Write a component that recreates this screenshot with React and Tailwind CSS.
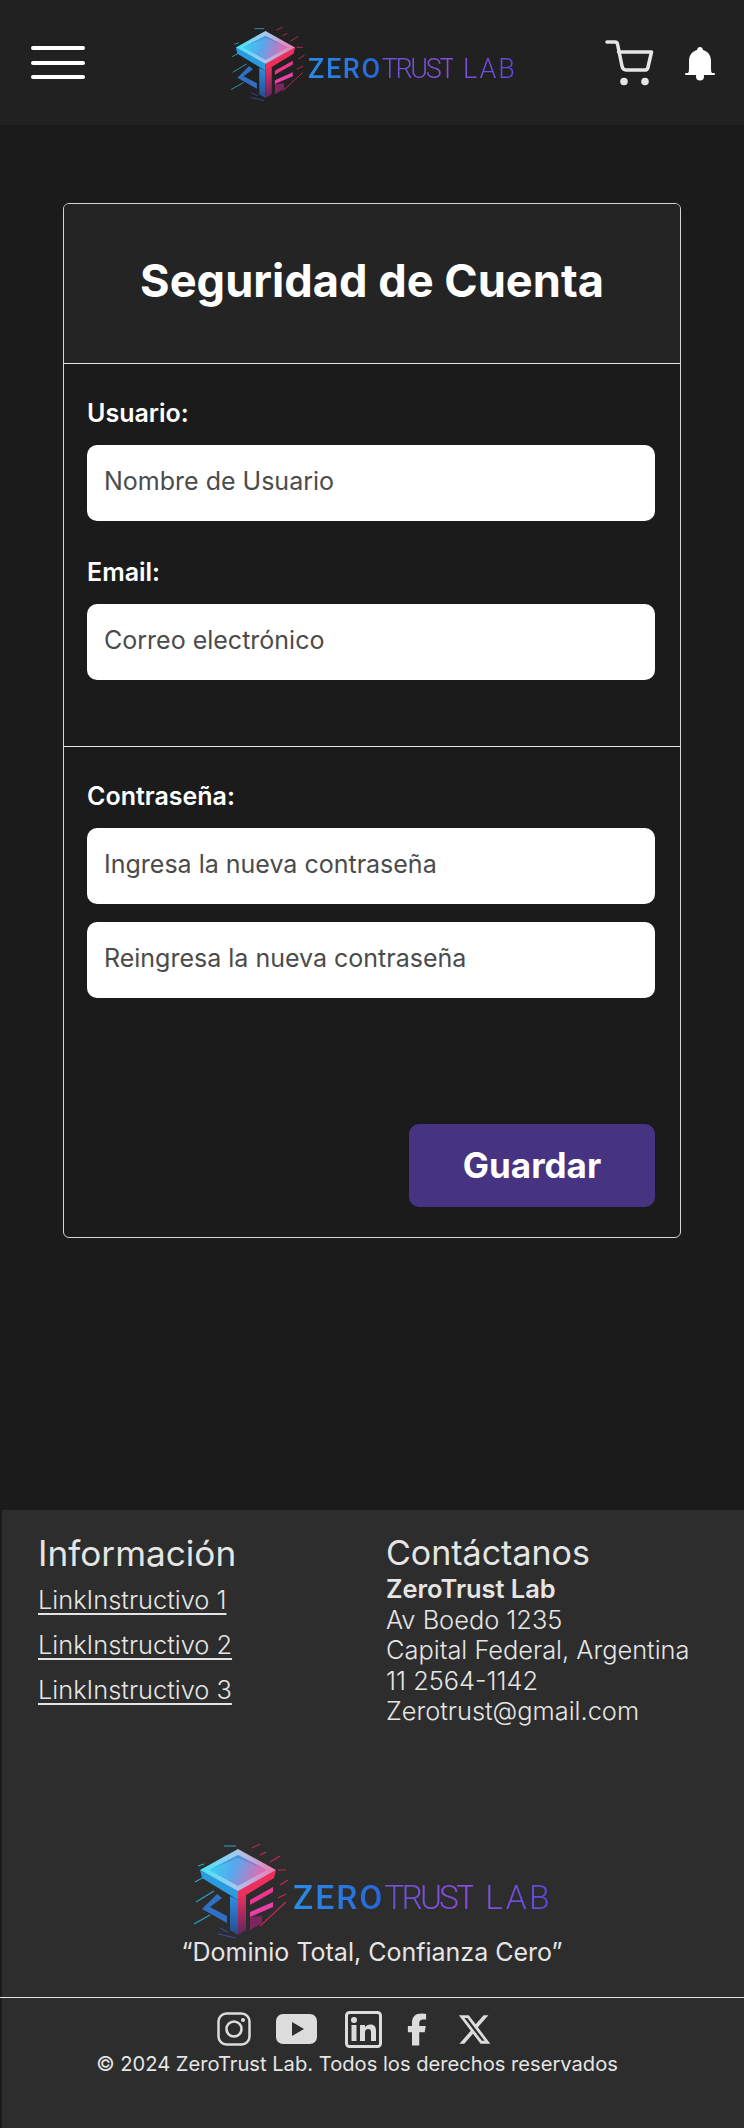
import React from "react";
import { FaFacebookF, FaXTwitter } from "react-icons/fa6";

const inter = { fontFamily: "Inter, sans-serif" };

function Cube({ className, id }) {
  return (
    <svg viewBox="0 0 105 100" className={className}>
      <defs>
        <linearGradient id={id + "t"} x1="0" y1="0" x2="1" y2="0.2">
          <stop offset="0" stopColor="#2fdcf5" />
          <stop offset="0.5" stopColor="#5aa6ec" />
          <stop offset="1" stopColor="#e56bb0" />
        </linearGradient>
        <linearGradient id={id + "r"} x1="0" y1="0" x2="1" y2="0">
          <stop offset="0" stopColor="#3fe6f8" />
          <stop offset="0.5" stopColor="#a9c6ee" />
          <stop offset="1" stopColor="#f07ab0" />
        </linearGradient>
        <linearGradient id={id + "c"} x1="0" y1="0" x2="0" y2="1">
          <stop offset="0" stopColor="#2f8fe0" />
          <stop offset="1" stopColor="#254a90" />
        </linearGradient>
        <linearGradient id={id + "p"} x1="0" y1="0" x2="0" y2="1">
          <stop offset="0" stopColor="#f0305f" />
          <stop offset="1" stopColor="#5d2560" />
        </linearGradient>
      </defs>
      <g strokeWidth="1.100" fill="none">
        <path d="M6 62 L24 51M4 84 L20 75M5 42 L14 37M8 26 L14 24M34 6 L46 6" stroke="#2aa6c8" />
        <path d="M62 8 L70 4M70 15 L76 12M80 22 L90 16M88 30 L96 30M90 45 L98 40M88 58 L96 54M70 86 L96 62" stroke="#c8285a" />
        <path d="M28 94 L46 98M30 88 L38 92" stroke="#3a4a9a" />
      </g>
      <path d="M10 30 L48 50 L48 60 L12 38Z" fill="#2a9be0" />
      <path d="M48 50 L86 30 L84 38 L48 60Z" fill="#ee2f5e" />
      <path d="M48 9 L86 30 L48 51 L10 30Z" fill={`url(#${id}r)`} />
      <path d="M48 15 L77 30 L48 46 L19 30Z" fill={`url(#${id}t)`} />
      <path d="M48 15 L77 30 L48 18 L19 30Z" fill="#2d6fb4" opacity="0.35" />
      <path d="M40 56 L48 60 L48 95 L40 90Z" fill={`url(#${id}c)`} />
      <path d="M48 60 L56 55 L56 90 L48 95Z" fill={`url(#${id}p)`} />
      <path d="M27 54 L32 58 L20 67 L37 76 L37 83 L12 69Z" fill="#2f6fc4" />
      <path d="M60 60 L83 47 L83 52 L60 65Z" fill="#f0358f" />
      <path d="M60 72 L83 62 L83 67 L60 77Z" fill="#ea3fa8" />
      <path d="M60 60 L60 90 L72 83 L72 76 L60 77Z" fill="#7c2560" />
    </svg>
  );
}

function LogoText({ className }) {
  return (
    <span className={"flex whitespace-nowrap leading-none " + className} style={{ fontFamily: "Roboto, sans-serif" }}>
      <span className="font-medium bg-linear-to-r from-[#2b8be8] to-[#2766d8] bg-clip-text text-transparent tracking-[0.06em]">ZERO</span>
      <span className="font-light bg-linear-to-r from-[#6a52d0] to-[#8a4ee0] bg-clip-text text-transparent tracking-[-0.085em]">TRUST</span>
      <span className="font-light bg-linear-to-r from-[#8450dc] to-[#5a48e4] bg-clip-text text-transparent tracking-[0.07em] ml-[0.36em]">LAB</span>
    </span>
  );
}

function Field({ text }) {
  return (
    <div className="h-[76px] w-full rounded-[10px] bg-white pl-[17px] pb-[3px] flex items-center text-[25px] text-[#4b4b4b]">
      {text}
    </div>
  );
}

function Label({ text }) {
  return <div className="h-[32px] leading-[32px] text-[25px] font-semibold text-white">{text}</div>;
}

function FooterLink({ text }) {
  return <a className="block h-[45px] leading-[45px] text-[25.400px] font-light underline underline-offset-[4px] text-[#e5e5e5]">{text}</a>;
}

export default function App() {
  return (
    <div className="w-[744px] h-[2128px] bg-[#1b1b1b] flex flex-col" style={inter}>
      <header className="h-[125px] bg-[#212121] flex items-center pl-[31px] pr-[29px] shrink-0">
        <div className="w-[54px] flex flex-col gap-[10.500px]">
          <div className="h-[4px] rounded-full bg-white" />
          <div className="h-[4px] rounded-full bg-white" />
          <div className="h-[4px] rounded-full bg-white" />
        </div>
        <div className="flex items-center ml-[143px]">
          <Cube id="h" className="w-[82px] h-[78px]" />
          <div className="pt-[14px] -ml-[2px]"><LogoText className="text-[27px]" /></div>
        </div>
        <svg viewBox="0 0 50 48" className="ml-auto w-[50px] h-[48px] mt-[-2px]">
          <path d="M3 4 H11 Q13 4 13.500 6 L18 28 Q18.800 32 22 32 H41 Q43 32 43.800 30 L47.500 14 H14.500" fill="none" stroke="#e5e5e5" strokeWidth="3.500" strokeLinecap="round" strokeLinejoin="round" />
          <circle cx="20" cy="43.500" r="3.800" fill="#e5e5e5" />
          <circle cx="41" cy="43.500" r="3.800" fill="#e5e5e5" />
        </svg>
        <svg viewBox="0 0 30 34" className="ml-[31px] w-[30px] h-[34px] mt-[2px]">
          <path d="M15 0 Q17.500 0 18 3 C23.500 4.500 26 9 26 14 L26 22 Q26 25 27 26 H3 Q4 25 4 22 L4 14 C4 9 6.500 4.500 12 3 Q12.500 0 15 0Z" fill="#fff" />
          <rect x="0" y="26" width="30" height="2" rx="1" fill="#fff" />
          <circle cx="15" cy="29.500" r="4" fill="#fff" />
        </svg>
      </header>

      <main className="flex-1 px-[63px] pt-[78px]">
        <div className="w-[618px] h-[1035px] rounded-[6px] border border-[#d4d4d4] overflow-hidden flex flex-col">
          <div className="h-[160px] bg-[#242424] border-b border-[#e5e5e5] flex items-center justify-center text-[45.200px] font-bold text-white shrink-0 pb-[6px]">
            Seguridad de Cuenta
          </div>
          <div className="h-[383px] border-b border-[#e5e5e5] pl-[23px] pr-[25px] pt-[33px] flex flex-col shrink-0">
            <Label text="Usuario:" />
            <div className="mt-[16px]"><Field text="Nombre de Usuario" /></div>
            <div className="mt-[35px]"><Label text="Email:" /></div>
            <div className="mt-[16px]"><Field text="Correo electrónico" /></div>
          </div>
          <div className="flex-1 pl-[23px] pr-[25px] pt-[33px] pb-[30px] flex flex-col">
            <Label text="Contraseña:" />
            <div className="mt-[16px]"><Field text="Ingresa la nueva contraseña" /></div>
            <div className="mt-[18px]"><Field text="Reingresa la nueva contraseña" /></div>
            <div className="mt-auto self-end w-[246px] h-[83px] rounded-[10px] bg-[#463482] flex items-center justify-center text-[35px] font-bold text-white">
              Guardar
            </div>
          </div>
        </div>
      </main>

      <footer className="h-[618px] ml-[2px] bg-[#2d2d2d] text-[#e5e5e5] shrink-0 flex flex-col">
        <div className="h-[330px] flex pl-[36px] pt-[24px] shrink-0">
          <div className="w-[348px]">
            <div className="h-[38px] leading-[38px] text-[35.200px] font-normal">Información</div>
            <div className="mt-[5px]">
              <FooterLink text="LinkInstructivo 1" />
              <FooterLink text="LinkInstructivo 2" />
              <FooterLink text="LinkInstructivo 3" />
            </div>
          </div>
          <div>
            <div className="h-[38px] leading-[38px] text-[34px] font-normal">Contáctanos</div>
            <div className="text-[25.400px] font-light leading-[30.500px] mt-[2px]">
              <div className="font-semibold">ZeroTrust Lab</div>
              <div>Av Boedo 1235</div>
              <div>Capital Federal, Argentina</div>
              <div>11 2564-1142</div>
              <div>Zerotrust@gmail.com</div>
            </div>
          </div>
        </div>
        <div className="h-[157px] shrink-0 flex flex-col items-center pr-[2px]">
          <div className="flex items-center self-start ml-[188px]">
            <Cube id="f" className="w-[105px] h-[100px]" />
            <div className="pt-[16px] -ml-[2px]"><LogoText className="text-[33.500px]" /></div>
          </div>
          <div className="text-[25px] font-normal leading-[30px] mt-[-3px]">“Dominio Total, Confianza Cero”</div>
        </div>
        <div className="-ml-[2px] border-t border-[#e5e5e5] flex-1 flex flex-col">
          <div className="flex items-center h-[36px] mt-[13px] ml-[217px] text-[#dcdcdc]">
            <svg viewBox="0 0 34 34" className="w-[34px] h-[34px]">
              <rect x="1.500" y="1.500" width="31" height="31" rx="8" fill="none" stroke="#dcdcdc" strokeWidth="2.500" />
              <circle cx="17" cy="17" r="7.500" fill="none" stroke="#dcdcdc" strokeWidth="2.500" />
              <circle cx="26" cy="8" r="2" fill="#dcdcdc" />
            </svg>
            <svg viewBox="0 0 41 30" className="w-[41px] h-[30px] ml-[25px]">
              <rect x="0" y="0" width="41" height="30" rx="7" fill="#dcdcdc" />
              <path d="M16 8 L28 15 L16 22Z" fill="#2d2d2d" />
            </svg>
            <svg viewBox="0 0 37 37" className="w-[37px] h-[37px] ml-[28px]">
              <rect x="1.500" y="1.500" width="34" height="34" rx="3" fill="none" stroke="#dcdcdc" strokeWidth="3" />
              <rect x="6.500" y="14" width="5" height="16" fill="#dcdcdc" />
              <circle cx="9" cy="9" r="3" fill="#dcdcdc" />
              <path d="M15 14 H20 V16.500 C21 14.800 23 13.600 25.500 13.600 C29.500 13.600 31 16 31 20 V30 H26 V21 C26 19 25 18 23 18 C21 18 20 19.500 20 21 V30 H15Z" fill="#dcdcdc" />
            </svg>
            <FaFacebookF className="w-[20px] h-[35px] ml-[25px]" />
            <FaXTwitter className="w-[35px] h-[35px] ml-[30px]" />
          </div>
          <div className="text-[20.150px] leading-[30px] mt-[2px] text-center w-[714px]">© 2024 ZeroTrust Lab. Todos los derechos reservados</div>
        </div>
      </footer>
    </div>
  );
}
